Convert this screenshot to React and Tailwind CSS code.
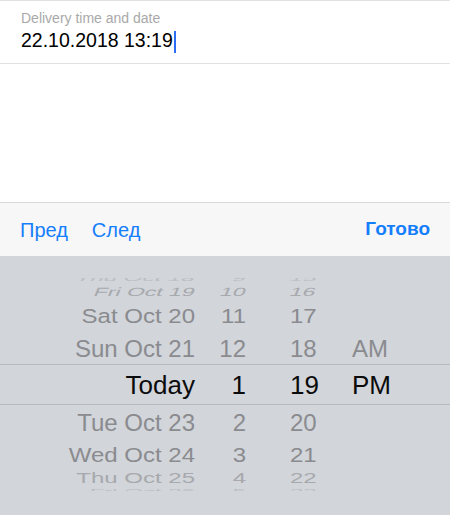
import React from 'react';

const rows = [
  { date: 'Thu Oct 18', h: '9', m: '15', ap: '', row: 'h-[14px] -mt-[7px]', text: 'text-[24px] text-[#bcbec2] scale-y-[0.35] -skew-x-[12deg]' },
  { date: 'Fri Oct 19', h: '10', m: '16', ap: '', row: 'h-[14px]', text: 'text-[23px] text-[#a7a9ad] scale-y-[0.52] -skew-x-[12deg]' },
  { date: 'Sat Oct 20', h: '11', m: '17', ap: '', row: 'h-[34px]', text: 'text-[24px] text-[#8a8b8f] scale-y-[0.82]' },
  { date: 'Sun Oct 21', h: '12', m: '18', ap: 'AM', row: 'h-[31px]', text: 'text-[24px] text-[#8a8b8f] scale-y-[0.97]' },
  { date: 'Today', h: '1', m: '19', ap: 'PM', row: 'h-[41px] border-y border-[#b7babf]', text: 'text-[26px] text-[#0b0b0c]' },
  { date: 'Tue Oct 23', h: '2', m: '20', ap: '', row: 'h-[36px]', text: 'text-[24px] text-[#8a8b8f] scale-y-[0.97]' },
  { date: 'Wed Oct 24', h: '3', m: '21', ap: '', row: 'h-[28px]', text: 'text-[24px] text-[#8a8b8f] scale-y-[0.82]' },
  { date: 'Thu Oct 25', h: '4', m: '22', ap: '', row: 'h-[18px]', text: 'text-[24px] text-[#a7a9ad] scale-y-[0.58]' },
  { date: 'Fri Oct 26', h: '5', m: '23', ap: '', row: 'h-[10px]', text: 'text-[24px] text-[#bcbec2] scale-y-[0.3]' },
];

function WheelRow({ r }) {
  return (
    <div className={`flex items-center shrink-0 ${r.row}`}>
      <div className={`flex items-center leading-none whitespace-nowrap ${r.text}`}>
        <span className="w-[195px] text-right">{r.date}</span>
        <span className="w-[51px] text-right">{r.h}</span>
        <span className="ml-[44px] w-[62px]">{r.m}</span>
        <span>{r.ap}</span>
      </div>
    </div>
  );
}

export default function App() {
  return (
    <div
      className="w-[450px] h-[515px] flex flex-col bg-white overflow-hidden"
      style={{ fontFamily: '"Liberation Sans", Arial, sans-serif' }}
    >
      {/* Input field */}
      <div className="border-t border-b border-[#e1e1e1] pt-[9px] pb-[11px] px-[21px]">
        <div className="text-[14px] leading-[17px] text-[#a9a9a9]">Delivery time and date</div>
        <div className="mt-[1px] flex items-start h-[24px]">
          <span className="text-[19.5px] leading-[24px] text-black">22.10.2018 13:19</span>
          <span className="ml-[1px] mt-[3px] w-[2px] h-[22px] bg-[#2b6ef5]" />
        </div>
      </div>

      <div className="flex-1" />

      {/* Keyboard toolbar */}
      <div className="h-[54px] shrink-0 border-t border-[#d9d9d9] bg-[#f7f7f7] flex items-center px-[20px] text-[20px] text-[#157efb]">
        <span>Пред</span>
        <span className="ml-[24px]">След</span>
        <span className="ml-auto font-bold text-[19px]">Готово</span>
      </div>

      {/* Date picker wheel */}
      <div className="h-[259px] shrink-0 bg-[#d2d5da] pt-[22px]">
        <div className="h-[213px] overflow-hidden flex flex-col">
          {rows.map((r) => (
            <WheelRow key={r.date} r={r} />
          ))}
        </div>
      </div>
    </div>
  );
}
